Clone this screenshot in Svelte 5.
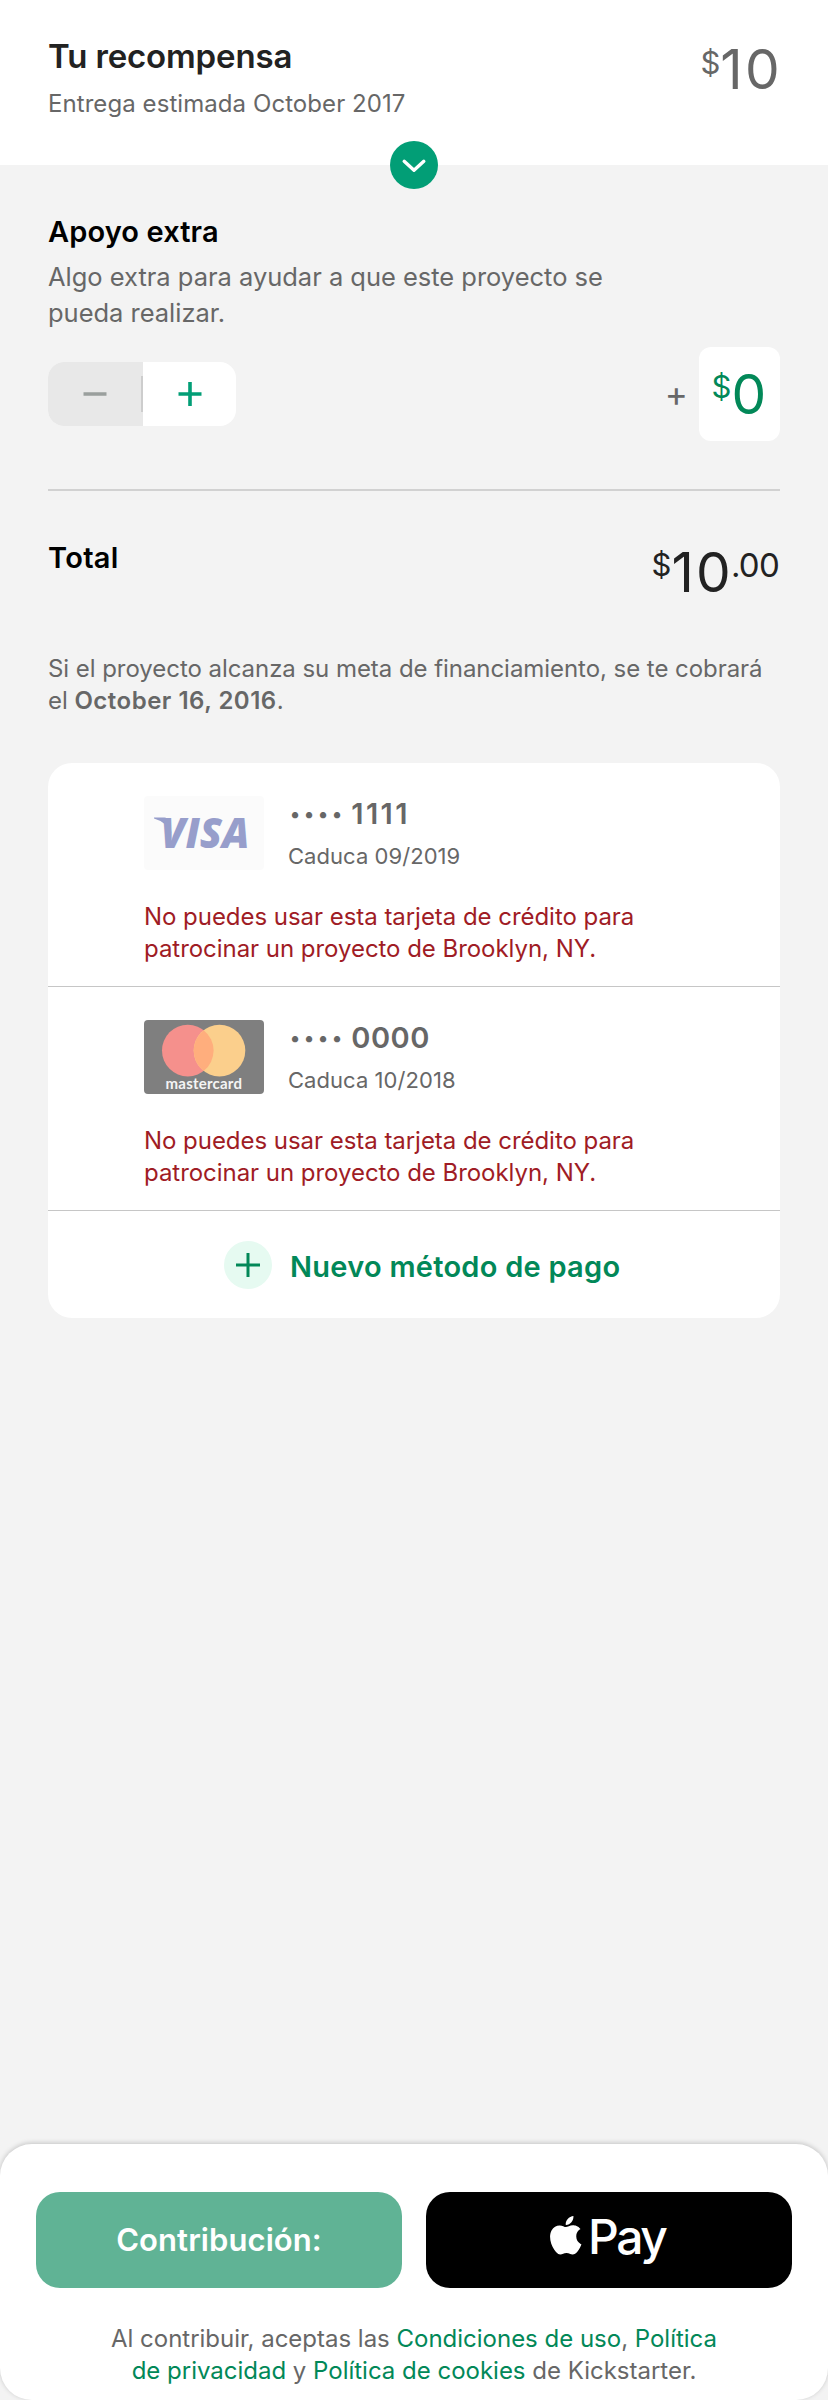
<script>
  const cards = [
    { brand: 'visa', last4: '1111', expires: '09/2019', tracking: 2.4 },
    { brand: 'mastercard', last4: '0000', expires: '10/2018', tracking: 0.5 }
  ];
</script>

<div class="screen">
  <header>
    <div>
      <h1>Tu recompensa</h1>
      <p class="delivery">Entrega estimada October 2017</p>
    </div>
    <div class="price reward"><span class="cur">$</span><span class="int">10</span></div>
    <button class="expand" aria-label="Expandir">
      <svg width="48" height="48" viewBox="0 0 48 48"><path d="M14.2 20.3 24 29.2 33.8 20.3" /></svg>
    </button>
  </header>

  <main>
    <h2>Apoyo extra</h2>
    <p class="desc">Algo extra para ayudar a que este proyecto se<br />pueda realizar.</p>

    <div class="bonus">
      <div class="stepper">
        <button class="minus" aria-label="Menos">
          <svg width="24" height="24" viewBox="0 0 24 24"><path d="M0.5 12H23.5" /></svg>
        </button>
        <button class="plus" aria-label="Más">
          <svg width="24" height="24" viewBox="0 0 24 24"><path d="M0.5 12H23.5M12 0V24" /></svg>
        </button>
      </div>
      <div class="amount">
        <span class="sign">+</span>
        <div class="price field"><span class="cur">$</span><span class="int">0</span></div>
      </div>
    </div>

    <hr />

    <div class="total">
      <h2>Total</h2>
      <div class="price sum"><span class="cur">$</span><span class="int">10</span><span class="dec">.00</span></div>
    </div>

    <p class="note">Si el proyecto alcanza su meta de financiamiento, se te cobrará<br />el <b>October 16, 2016</b>.</p>

    <section class="methods">
      {#each cards as card}
        <article>
          <div class="card">
            {#if card.brand === 'visa'}
              <svg class="logo" width="120" height="74" viewBox="0 0 120 74">
                <rect width="120" height="74" rx="4" fill="#fbfbfb" />
                <path d="M10 21.6H20.5Q23.5 21.6 24.2 24.6L27.5 37Q22 26 10 22.6Z" fill="#979ecb" />
                <text x="16.5" y="51.5" class="visa" textLength="89" lengthAdjust="spacingAndGlyphs">VISA</text>
              </svg>
            {:else}
              <svg class="logo" width="120" height="74" viewBox="0 0 120 74">
                <rect width="120" height="74" rx="4" fill="#7f7f7f" />
                <circle cx="43.8" cy="30.6" r="25.8" fill="#f5908c" />
                <circle cx="75.5" cy="30.6" r="25.8" fill="#fbcf8c" />
                <path d="M59.65 10.25a25.8 25.8 0 0 1 0 40.7a25.8 25.8 0 0 1 0-40.7Z" fill="#ffae7d" />
                <text x="21.5" y="69" class="mc" textLength="76.5" lengthAdjust="spacing">mastercard</text>
              </svg>
            {/if}
            <div class="meta">
              <p class="num"><span class="dots">••••</span><span style="letter-spacing: {card.tracking}px">{card.last4}</span></p>
              <p class="exp">Caduca {card.expires}</p>
            </div>
          </div>
          <p class="error">No puedes usar esta tarjeta de crédito para<br />patrocinar un proyecto de Brooklyn, NY.</p>
        </article>
      {/each}
      <button class="new">
        <svg width="48" height="48" viewBox="0 0 48 48">
          <circle cx="24" cy="24" r="24" fill="#e6faf1" />
          <path d="M12 24H36M24 12V36" stroke="#028858" stroke-width="3" />
        </svg>
        <span>Nuevo método de pago</span>
      </button>
    </section>
  </main>

  <footer>
    <div class="actions">
      <button class="pledge">Contribución:</button>
      <button class="apple" aria-label="Apple Pay">
        <svg width="31.5" height="38.5" viewBox="2.2 0 19.6 24">
          <path fill="#fff" d="M12.152 6.896c-.948 0-2.415-1.078-3.96-1.04-2.04.027-3.91 1.183-4.961 3.014-2.117 3.675-.546 9.103 1.519 12.09 1.013 1.454 2.208 3.09 3.792 3.039 1.52-.065 2.09-.987 3.935-.987 1.831 0 2.35.987 3.96.948 1.637-.026 2.676-1.48 3.676-2.948 1.156-1.688 1.636-3.325 1.662-3.415-.039-.013-3.182-1.221-3.22-4.857-.026-3.04 2.48-4.494 2.597-4.559-1.429-2.09-3.623-2.324-4.39-2.376-2-.156-3.675 1.09-4.61 1.09zM15.53 3.83c.843-1.012 1.4-2.427 1.245-3.83-1.207.052-2.662.805-3.532 1.818-.78.896-1.454 2.338-1.273 3.714 1.338.104 2.715-.688 3.559-1.701" />
        </svg>
        <span>Pay</span>
      </button>
    </div>
    <p class="terms">Al contribuir, aceptas las <a href="#t">Condiciones de uso</a>, <a href="#p">Política<br />de privacidad</a> y <a href="#c">Política de cookies</a> de Kickstarter.</p>
  </footer>
</div>

<style>
  .screen {
    width: 828px;
    height: 2400px;
    display: flex;
    flex-direction: column;
    background: #f3f3f3;
    color: #676767;
    font: 400 24px/32px Inter, sans-serif;
    overflow: hidden;
  }
  h1, h2, p { margin: 0; white-space: nowrap; }
  button { border: 0; margin: 0; padding: 0; font: inherit; }
  svg { display: block; fill: none; flex: none; }

  header {
    position: relative;
    display: flex;
    justify-content: space-between;
    height: 165px;
    box-sizing: border-box;
    padding: 36px 48px 0;
    background: #fff;
  }
  h1 { font: 600 33px/40px Inter, sans-serif; letter-spacing: -0.15px; color: #222; }
  h2 { font: 600 29px/36px Inter, sans-serif; letter-spacing: 0.12px; color: #000; }
  .delivery { margin-top: 12px; letter-spacing: 0.07px; }
  .expand {
    position: absolute;
    left: 50%;
    bottom: -24px;
    width: 48px;
    height: 48px;
    margin-left: -24px;
    border-radius: 50%;
    background: #029e76;
  }
  .expand path { stroke: #fff; stroke-width: 3.4; stroke-linecap: round; stroke-linejoin: round; }

  .price { display: flex; align-items: flex-start; }
  .cur { font-size: 31px; line-height: 31px; margin-top: 4.5px; }
  .int { font-size: 55px; line-height: 55px; letter-spacing: 2.2px; }
  .dec { font-size: 33px; line-height: 33px; letter-spacing: -0.74px; margin: 4px 0 0 -2px; }
  .reward { margin: 6px -1.8px 0 0; }

  main { padding: 49px 48px 0; }
  .desc { margin-top: 9px; font-size: 25.5px; line-height: 36px; letter-spacing: -0.02px; }
  .bonus { display: flex; justify-content: space-between; align-items: center; height: 94px; margin-top: 16px; }
  .stepper { display: flex; width: 188px; height: 64px; border-radius: 16px; overflow: hidden; background: #fff; }
  .stepper button { display: flex; align-items: center; justify-content: center; background: none; }
  .stepper path { stroke-width: 3.6; }
  .stepper .minus {
    width: 95px;
    box-sizing: border-box;
    padding-right: 2px;
    background: linear-gradient(#cdcdcd, #cdcdcd) right center / 2px 36px no-repeat, #e8e8e8;
  }
  .minus path { stroke: #9a9f9d; }
  .stepper .plus { flex: 1; }
  .plus path { stroke: #029e76; }
  .amount { display: flex; align-items: flex-start; gap: 11px; height: 94px; }
  .sign { font-size: 35px; line-height: 36px; margin-top: 28px; }
  .field {
    width: 81px;
    height: 94px;
    box-sizing: border-box;
    padding: 19.5px 0 0 12.5px;
    border-radius: 12px;
    background: #fff;
    color: #028858;
  }
  hr { height: 2px; border: 0; margin: 48px 0 49px; background: #d1d1d1; }
  .total { display: flex; justify-content: space-between; height: 60px; }
  .total h2 { letter-spacing: 0.3px; }
  .sum { margin: 4.5px 1px 0 0; color: #222; }
  .note { margin-top: 53px; letter-spacing: -0.05px; }
  .note b { font-weight: 600; letter-spacing: 0.5px; }

  .methods { margin-top: 46px; border-radius: 24px; background: #fff; overflow: hidden; }
  article { padding: 33px 96px 21px; border-bottom: 1px solid #c6c6c6; }
  .card { display: flex; height: 74px; gap: 24px; }
  .visa { font: italic 800 42.5px "Open Sans", sans-serif; fill: #979ecb; }
  .mc { font: 700 15px Lato, sans-serif; fill: #f4f4f4; }
  .num { padding-left: 2px; font: 600 29px/36px Inter, sans-serif; }
  .dots { font-size: 20px; line-height: 1; letter-spacing: 3.9px; vertical-align: 3px; margin-right: 5.4px; }
  .exp { margin-top: 10px; font-size: 22px; line-height: 28px; letter-spacing: 0.05px; }
  .error { margin-top: 31px; color: #9f1c25; letter-spacing: -0.04px; }
  .new {
    display: flex;
    align-items: center;
    gap: 18px;
    width: 100%;
    height: 107px;
    padding-left: 176px;
    background: none;
    color: #028858;
    font: 600 29px/36px Inter, sans-serif;
    letter-spacing: 0.26px;
  }
  .new span { margin-top: 4px; }

  footer {
    margin-top: auto;
    height: 256px;
    box-sizing: border-box;
    padding: 48px 36px 0;
    border-radius: 32px;
    background: #fff;
    box-shadow: 0 -1px 5px rgba(0, 0, 0, 0.2);
  }
  .actions { display: grid; grid-template-columns: 1fr 1fr; gap: 24px; height: 96px; }
  .actions button { border-radius: 24px; color: #fff; }
  .pledge { background: #60b395; font: 600 31px/40px Inter, sans-serif; letter-spacing: 0.08px; }
  .apple { display: flex; align-items: flex-start; padding: 24px 0 0 124px; gap: 6.5px; background: #000; }
  .apple span { margin-top: -3.5px; font: 450 48px/48px Inter, sans-serif; letter-spacing: -2.4px; }
  .terms { margin-top: 35px; text-align: center; letter-spacing: -0.01px; }
  a { color: #028858; text-decoration: none; }
</style>
